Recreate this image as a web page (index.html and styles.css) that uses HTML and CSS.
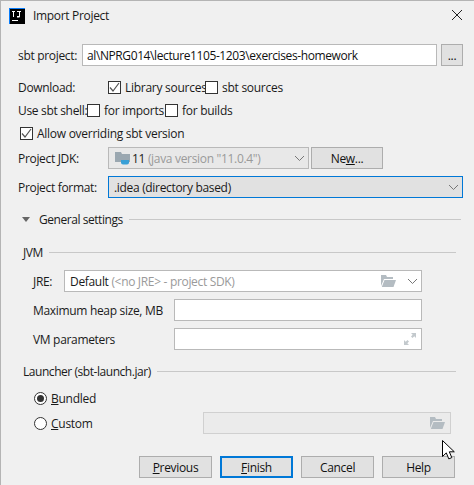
FILE: index.html
```html
<!DOCTYPE html>
<html lang="en">
<head>
<meta charset="utf-8">
<title>Import Project</title>
<link rel="stylesheet" href="styles.css">
</head>
<body>
<div class="dialog">
  <header class="titlebar">
    <svg class="app-icon" width="16" height="16" viewBox="0 0 16 16"><rect width="16" height="16" fill="#087cfa"/><rect x="1" y="1" width="15" height="15" fill="#000"/><rect x="3" y="12" width="6" height="1" fill="#fff"/><path d="M3 3h3v1H5v5H4V4H3zM8 3h4v1h-1v4.5a1 1 0 0 1-1 1H8V8h2V4H8z" fill="#fff"/></svg>
    <span class="title">Import Project</span>
    <svg class="close" width="10" height="10" viewBox="0 0 10 10"><path d="M0 0l10 10M10 0L0 10" stroke="#222" stroke-width="1" fill="none"/></svg>
  </header>
  <main class="content">
    <div class="row r-project">
      <label class="lbl-project">sbt project:</label>
      <div class="field grow path"><span class="combo-text">al\NPRG014\lecture1105-1203\exercises-homework</span></div>
      <button class="btn btn-more">...</button>
    </div>
    <div class="row r-download">
      <span class="lbl-wide">Download:</span>
      <span class="check on"><svg width="11" height="11" viewBox="0 0 11 11"><path d="M1 5.5L4 9l6-8" stroke="#555" stroke-width="1.2" fill="none"/></svg></span>
      <span class="opt w-lib">Library sources</span>
      <span class="check"></span>
      <span class="opt">sbt sources</span>
    </div>
    <div class="row r-shell">
      <span class="lbl-shell">Use sbt shell:</span>
      <span class="check"></span>
      <span class="opt w-imports">for imports</span>
      <span class="check"></span>
      <span class="opt">for builds</span>
    </div>
    <div class="row r-allow">
      <span class="check on first"><svg width="11" height="11" viewBox="0 0 11 11"><path d="M1 5.5L4 9l6-8" stroke="#555" stroke-width="1.2" fill="none"/></svg></span>
      <span class="opt">Allow overriding sbt version</span>
    </div>
    <div class="row r-jdk">
      <span class="lbl-wide">Project <u>J</u>DK:</span>
      <div class="combo disabled w-jdk">
        <svg class="jdk-icon" width="16" height="16" viewBox="0 0 16 16"><path d="M0 2h6l1 2h8v8H0z" fill="#9aa7b0"/><path d="M6 10h8v2.5a2 2 0 0 1-2 2H8a2 2 0 0 1-2-2z" fill="#389fd6"/></svg>
        <span class="combo-text">11 <span class="muted">(java version "11.0.4")</span></span>
        <svg class="chev" width="9" height="5" viewBox="0 0 9 5"><path d="M0 0l4.500 4.500L9 0" stroke="#777" fill="none"/></svg>
      </div>
      <button class="btn btn-new">Ne<u>w</u>...</button>
    </div>
    <div class="row r-format">
      <span class="lbl-wide">Project format:</span>
      <div class="combo focused grow">
        <span class="combo-text">.idea (directory based)</span>
        <svg class="chev" width="9" height="5" viewBox="0 0 9 5"><path d="M0 0l4.500 4.500L9 0" stroke="#777" fill="none"/></svg>
      </div>
    </div>
    <div class="row r-general">
      <span class="triangle"></span>
      <span class="sep-title">General settings</span>
      <span class="rule"></span>
    </div>
    <div class="row r-jvm section">
      <span class="sep-title">JVM</span>
      <span class="rule"></span>
    </div>
    <div class="row r-jre inner">
      <span class="lbl-jre"><u>J</u>RE:</span>
      <div class="field grow combo-field">
        <span class="combo-text">Default <span class="muted">(&lt;no JRE&gt; - project SDK)</span></span>
        <svg class="folder" width="15" height="12" viewBox="0 0 15 12"><path d="M0 0h5l1 2h6v2H3L0 11z" fill="#b4bcc2"/><path d="M3.500 5H15l-2.500 7H.8z" fill="#b4bcc2"/></svg>
        <svg class="chev" width="9" height="5" viewBox="0 0 9 5"><path d="M0 0l4.500 4.500L9 0" stroke="#777" fill="none"/></svg>
      </div>
    </div>
    <div class="row r-heap inner">
      <span class="lbl-param">Maximum heap size, MB</span>
      <div class="field grow"></div>
    </div>
    <div class="row r-vm inner">
      <span class="lbl-param">VM parameters</span>
      <div class="field grow expand-field">
        <svg width="12" height="12" viewBox="0 0 12 12"><path d="M7 0h5v5L10.300 3.300 8.500 5 7 3.500 8.700 1.700zM5 12H0V7l1.700 1.700L3.500 7 5 8.500 3.300 10.300z" fill="#c3c9cd"/></svg>
      </div>
    </div>
    <div class="row r-launcher section">
      <span class="sep-title">Launcher (sbt-launch.jar)</span>
      <span class="rule"></span>
    </div>
    <div class="row r-bundled radio-row">
      <span class="radio on"></span>
      <span class="opt"><u>B</u>undled</span>
    </div>
    <div class="row r-custom radio-row">
      <span class="radio"></span>
      <span class="opt w-custom"><u>C</u>ustom</span>
      <div class="field disabled-field">
        <svg class="folder" width="15" height="12" viewBox="0 0 15 12"><path d="M0 0h5l1 2h6v2H3L0 11z" fill="#b4bcc2"/><path d="M3.500 5H15l-2.500 7H.8z" fill="#b4bcc2"/></svg>
      </div>
    </div>
    <footer class="actions">
      <button class="btn act"><u>P</u>revious</button>
      <button class="btn act default"><u>F</u>inish</button>
      <button class="btn act">Cancel</button>
      <button class="btn act">Help</button>
    </footer>
  </main>
  <svg class="cursor" width="13" height="21" viewBox="0 0 13 21"><path d="M.5.500v16l3.800-3.600 2.500 6 3-1.300-2.500-5.800h5z" fill="#fff" stroke="#000"/></svg>
</div>
</body>
</html>
```
FILE: styles.css
```css
* { box-sizing: border-box; }
html, body { margin: 0; padding: 0; }
body { width: 474px; height: 485px; overflow: hidden; background: #f0f0f0; }
.dialog {
  position: relative;
  width: 474px;
  height: 485px;
  background: #f0f0f0;
  border-top: 1px solid #b4b4b4;
  border-left: 1px solid #b4b4b4;
  font: 12px/16px "Open Sans", "Noto Sans", sans-serif;
  letter-spacing: -0.32px;
  color: #1a1a1a;
}
.titlebar { display: flex; align-items: center; height: 30px; padding: 0 12px 0 8px; }
.app-icon { flex: none; }
.title { margin-left: 8px; }
.close { margin-left: auto; margin-bottom: 2px; }
.content { display: flex; flex-direction: column; padding: 13px 11px 0 17px; }
.row { display: flex; align-items: center; flex: none; }
.r-project { height: 22px; }
.r-download { height: 18px; margin-top: 12px; }
.r-shell { height: 18px; margin-top: 5px; }
.r-allow { height: 18px; margin-top: 5px; }
.r-jdk { height: 22px; margin-top: 5px; }
.r-format { height: 22px; margin-top: 7px; }
.r-general { height: 18px; margin-top: 12px; padding-left: 4px; padding-right: 2px; }
.r-jvm { height: 18px; margin-top: 15px; }
.r-jre { height: 22px; margin-top: 9px; }
.r-heap { height: 22px; margin-top: 7px; }
.r-vm { height: 22px; margin-top: 7px; }
.r-launcher { height: 18px; margin-top: 12px; }
.r-bundled { height: 18px; margin-top: 9px; }
.r-custom { height: 22px; margin-top: 5px; }
.section { padding-left: 5px; padding-right: 7px; }
.inner { padding-left: 15px; padding-right: 41px; }
.radio-row { padding-left: 16px; }
.grow { flex: 1; min-width: 0; }
.lbl-project, .lbl-wide, .lbl-shell, .lbl-jre, .lbl-param, .opt, .sep-title, .combo-text { padding-top: 2px; }
.sep-title { letter-spacing: -0.45px; }
.lbl-project { width: 64px; flex: none; }
.lbl-wide { width: 90px; flex: none; }
.lbl-shell { width: 69px; flex: none; white-space: nowrap; }
.lbl-jre { width: 31px; flex: none; }
.lbl-param { width: 141px; flex: none; white-space: nowrap; }
.field {
  display: flex;
  align-items: center;
  height: 22px;
  background: #fff;
  border: 1px solid #b9b9b9;
  padding: 0 4px;
}
.path { color: #111; letter-spacing: -0.4px; }
.combo-field { padding-left: 5px; }
.expand-field { justify-content: flex-end; padding-right: 5px; }
.disabled-field {
  width: 248px;
  margin-left: auto;
  margin-right: 12px;
  background: #ebebeb;
  border-color: #d0d0d0;
  justify-content: flex-end;
  padding-right: 5px;
}
.combo {
  display: flex;
  align-items: center;
  height: 22px;
  background: #e1e1e1;
  border: 1px solid #adadad;
  padding: 0 4px 0 5px;
}
.combo.disabled { background: #e8e8e8; border-color: #b9b9b9; }
.w-jdk { width: 201px; flex: none; padding-left: 6px; }
.focused { border-color: #0078d7; }
.combo-text { white-space: nowrap; }
.muted { color: #9a9a9a; }
.chev { margin-left: auto; flex: none; }
.jdk-icon { margin-right: 1px; flex: none; }
.folder { flex: none; margin-left: auto; }
.folder + .chev { margin-left: 12px; }
.btn {
  font: inherit;
  letter-spacing: inherit;
  color: #111;
  background: #e1e1e1;
  border: 1px solid #adadad;
  height: 22px;
  padding: 2px 0 0;
  flex: none;
}
.btn-more { width: 22px; margin-left: 4px; }
.btn-new { width: 72px; margin-left: 2px; }
.check {
  display: flex;
  flex: none;
  align-items: center;
  justify-content: center;
  width: 13px;
  height: 13px;
  background: #fff;
  border: 1px solid #333;
}
.check.first { margin-left: 2px; }
.opt { margin-left: 4px; white-space: nowrap; letter-spacing: -0.27px; }
.w-lib { width: 80px; }
.w-imports { width: 61px; }
.w-custom { width: 60px; }
.radio {
  flex: none;
  position: relative;
  width: 13px;
  height: 13px;
  border: 1px solid #333;
  border-radius: 50%;
  background: #fff;
}
.radio.on::after {
  content: "";
  position: absolute;
  left: 2px;
  top: 2px;
  width: 7px;
  height: 7px;
  border-radius: 50%;
  background: #333;
}
.triangle {
  flex: none;
  width: 0;
  height: 0;
  border-left: 4px solid transparent;
  border-right: 4px solid transparent;
  border-top: 5px solid #666;
  margin-right: 9px;
}
.rule { flex: 1; height: 1px; background: #c8c8c8; margin-left: 6px; }
.actions { display: flex; justify-content: flex-end; gap: 8px; margin-top: 22px; padding-right: 8px; }
.act { width: 73px; }
.default { border: 2px solid #0078d7; }
.cursor { position: absolute; left: 441px; top: 439px; }
```
